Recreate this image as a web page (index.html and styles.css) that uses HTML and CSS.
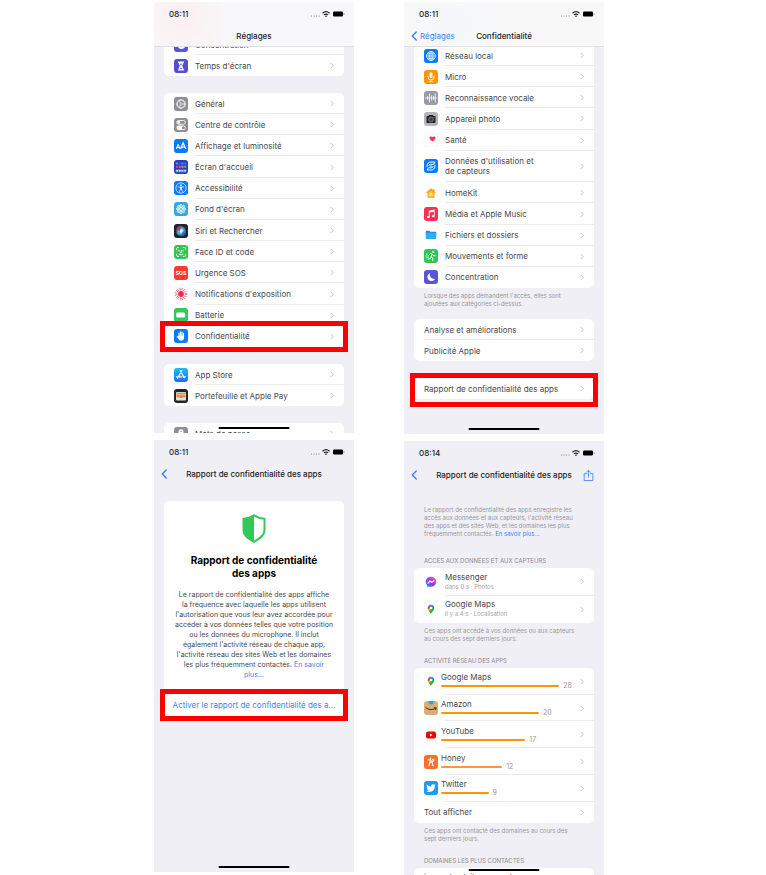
FILE: index.html
```
<!DOCTYPE html>
<html lang="fr">
<head>
<meta charset="utf-8">
<title>Rapport de confidentialité des apps</title>
<link rel="stylesheet" href="styles.css">
</head>
<body>
<svg class="defs" aria-hidden="true">
  <symbol id="chev" viewBox="0 0 8 14"><path d="M1.5 2 6.500 7l-5 5" fill="none" stroke="#b4b4b8" stroke-width="1.600"/></symbol>
  <symbol id="back" viewBox="0 0 12 20"><path d="M10.500 2 2.500 10l8 8" fill="none" stroke="#2f7cf6" stroke-width="2.600" stroke-linecap="round" stroke-linejoin="round"/></symbol>
  <symbol id="status" viewBox="0 0 36 10">
    <g fill="#777"><circle cx="2.500" cy="7" r=".6"/><circle cx="5" cy="7" r=".6"/><circle cx="7.500" cy="7" r=".6"/><circle cx="10" cy="7" r=".6"/></g>
    <g fill="none" stroke="#222" stroke-width="1.200"><path d="M13.500 4.200q3.500-3 7 0"/><path d="M14.900 5.900q2.100-1.700 4.200 0"/></g>
    <path d="M15.900 7q1.100-.8 2.200 0L17 8.300z" fill="#222"/>
    <rect x="24" y="2.500" width="10" height="5" rx="1.200" fill="#000"/><rect x="34.500" y="4" width="1" height="2" fill="#999"/>
  </symbol>
  <symbol id="pin" viewBox="0 0 28 28">
    <rect x=".5" y=".5" width="27" height="27" rx="6" fill="#fff" stroke="#ececf0"/>
    <path d="M14 24c-.8-3.500-6.500-6.500-6.500-12 0-1.800.7-3.300 1.700-4.500L14 12z" fill="#fbbc04"/>
    <path d="M14 24c.8-3.500 6.500-6.500 6.500-12 0-1.500-.4-2.800-1.100-3.900L10 18.500c1.600 2 3.500 3.500 4 5.500z" fill="#34a853"/>
    <path d="M9.200 7.500A6.500 6.500 0 0 1 14 5.400l-1 4.800-3.500 4.100-1.600-.2A7 7 0 0 1 9.200 7.500z" fill="#ea4335"/>
    <path d="M13 5.500a6.500 6.500 0 0 1 6.500 2.700L14.300 14.500 10 11z" fill="#4285f4"/>
    <circle cx="14" cy="11.800" r="2.500" fill="#fff"/>
  </symbol>
</svg>

<main class="board">
  <div class="column">

    <section class="phone phone-a" aria-label="Réglages">
      <header class="top frosted tint-pink">
        <div class="status"><span>08:11</span><svg class="status-icons"><use href="#status"/></svg></div>
        <div class="nav"><h1>Réglages</h1></div>
      </header>
      <div class="scroll settings">
        <nav class="group">
          <a class="row" href="#"><svg class="icon" viewBox="0 0 28 28"><rect width="28" height="28" rx="6" fill="#5856d6"/><path d="M12 6a8.300 8.300 0 1 0 10.500 11.500A8.800 8.800 0 0 1 12 6z" fill="#fff"/></svg><span>Concentration</span><svg class="chev"><use href="#chev"/></svg></a>
          <a class="row" href="#"><svg class="icon" viewBox="0 0 28 28"><rect width="28" height="28" rx="6" fill="#5550d0"/><path d="M8 5h12v2.500h-1.500c0 3.500-1 5-3 6.500 2 1.500 3 3 3 6.500H20V23H8v-2.500h1.500c0-3.500 1-5 3-6.500-2-1.500-3-3-3-6.500H8z" fill="#fff"/><path d="M11.500 9.500h5L14 13zM11 20q3-4 6 0z" fill="#5550d0"/></svg><span>Temps d'écran</span><svg class="chev"><use href="#chev"/></svg></a>
        </nav>
        <nav class="group twelve">
          <a class="row" href="#"><svg class="icon" viewBox="0 0 28 28"><rect width="28" height="28" rx="6" fill="#8e8e93"/><g fill="none" stroke="#fff"><circle cx="14" cy="14" r="9" stroke-width="2" stroke-dasharray="1.700 1.130"/><circle cx="14" cy="14" r="7.500" stroke-width="1.500"/><circle cx="14" cy="14" r="2.200" stroke-width="1.300"/><path d="M16 14h5.500M13 12l-2.800-4.500M13 16l-2.800 4.500" stroke-width="1.300"/></g></svg><span>Général</span><svg class="chev"><use href="#chev"/></svg></a>
          <a class="row" href="#"><svg class="icon" viewBox="0 0 28 28"><rect width="28" height="28" rx="6" fill="#8e8e93"/><rect x="5.500" y="5" width="17" height="7.500" rx="3.700" fill="none" stroke="#fff" stroke-width="1.700"/><circle cx="9.500" cy="8.700" r="2.800" fill="#fff"/><rect x="4.800" y="15" width="18.400" height="9" rx="4.500" fill="#fff"/><circle cx="18.700" cy="19.500" r="3" fill="#8e8e93"/></svg><span>Centre de contrôle</span><svg class="chev"><use href="#chev"/></svg></a>
          <a class="row" href="#"><svg class="icon" viewBox="0 0 28 28"><rect width="28" height="28" rx="6" fill="#087aff"/><g fill="none" stroke="#fff" stroke-width="2"><path d="M4.500 20 8.300 10.500 12 20M6 16.800h4.600"/><path d="M13 20 18.300 7.500 23.700 20M15 16.300h6.800" stroke-width="2.400"/></g></svg><span>Affichage et luminosité</span><svg class="chev"><use href="#chev"/></svg></a>
          <a class="row" href="#"><svg class="icon" viewBox="0 0 28 28"><rect width="28" height="28" rx="6" fill="#2a3fb8"/><g><rect x="4" y="5" width="4" height="4" fill="#4a90ff"/><rect x="9.500" y="5" width="4" height="4" fill="#3267ee"/><rect x="15" y="5" width="4" height="4" fill="#4a90ff"/><rect x="20.500" y="5" width="4" height="4" fill="#3a6cff"/><rect x="4" y="11.500" width="4" height="4" fill="#f0455a"/><rect x="9.500" y="11.500" width="4" height="4" fill="#e651bb"/><rect x="15" y="11.500" width="4" height="4" fill="#f8914b"/><rect x="20.500" y="11.500" width="4" height="4" fill="#49cc77"/><rect x="3" y="18.500" width="22" height="6" rx="2" fill="#5e7fd8"/><path d="M4.500 20h3.500v3H4.500zM10 20h3.500v3H10zM15 20h3.500v3H15zM20.500 20H24v3h-3.500z" fill="#bfe1ff"/></g></svg><span>Écran d'accueil</span><svg class="chev"><use href="#chev"/></svg></a>
          <a class="row" href="#"><svg class="icon" viewBox="0 0 28 28"><rect width="28" height="28" rx="6" fill="#087aff"/><circle cx="14" cy="14" r="10.300" fill="none" stroke="#fff" stroke-width="1.500"/><circle cx="14" cy="8.300" r="1.700" fill="#fff"/><path d="M8.500 11.700 14 12.500l5.500-.8M14 12.500v3.500M13 12.500v3.500L11 21M15 12.500v3.500L17 21" fill="none" stroke="#fff" stroke-width="1.600" stroke-linecap="round" stroke-linejoin="round"/></svg><span>Accessibilité</span><svg class="chev"><use href="#chev"/></svg></a>
          <a class="row" href="#"><svg class="icon" viewBox="0 0 28 28"><rect width="28" height="28" rx="6" fill="#35a9dc"/><g fill="#8fd2ef" stroke="#fff" stroke-width="1.200"><ellipse cx="14" cy="8.500" rx="2.600" ry="4"/><ellipse cx="14" cy="19.500" rx="2.600" ry="4"/><ellipse cx="8.500" cy="14" rx="4" ry="2.600"/><ellipse cx="19.500" cy="14" rx="4" ry="2.600"/><g transform="rotate(45 14 14)"><ellipse cx="14" cy="8.500" rx="2.600" ry="4"/><ellipse cx="14" cy="19.500" rx="2.600" ry="4"/><ellipse cx="8.500" cy="14" rx="4" ry="2.600"/><ellipse cx="19.500" cy="14" rx="4" ry="2.600"/></g><circle cx="14" cy="14" r="2.500" fill="#35a9dc"/></g></svg><span>Fond d'écran</span><svg class="chev"><use href="#chev"/></svg></a>
          <a class="row" href="#"><svg class="icon" viewBox="0 0 28 28"><defs><radialGradient id="siri"><stop offset="0" stop-color="#fff"/><stop offset=".35" stop-color="#7fd8e8"/><stop offset=".75" stop-color="#2b7a9c"/><stop offset="1" stop-color="#24243a"/></radialGradient></defs><rect width="28" height="28" rx="6" fill="#22202f"/><circle cx="14" cy="14" r="11" fill="url(#siri)"/><path d="M4 10a11 11 0 0 1 11-7c-2 5-3 7-1 11C10 14 7 13 4 10z" fill="#b3315f" opacity=".85"/><path d="M15 15c4-1 7-1 9.500 1A11 11 0 0 1 14 25c2-4 3-6 1-10z" fill="#3558d8" opacity=".7"/><path d="M5 18c4-4 7-4 9-4-1 4-2 6-5 9a9 9 0 0 1-4-5z" fill="#2ec2a7" opacity=".6"/><circle cx="14.500" cy="14" r="3" fill="#fff" opacity=".8"/></svg><span>Siri et Rechercher</span><svg class="chev"><use href="#chev"/></svg></a>
          <a class="row" href="#"><svg class="icon" viewBox="0 0 28 28"><rect width="28" height="28" rx="6" fill="#30c555"/><g fill="none" stroke="#fff" stroke-width="1.700" stroke-linecap="round"><path d="M5 9.500V7.500Q5 5 7.500 5h2M18.500 5h2Q23 5 23 7.500v2M23 18.500v2q0 2.500-2.500 2.500h-2M9.500 23h-2Q5 23 5 20.500v-2M10 10.500v2M18 10.500v2M14.500 10.500v5h-1.500M10 18.500q4 3 8 0"/></g></svg><span>Face ID et code</span><svg class="chev"><use href="#chev"/></svg></a>
          <a class="row" href="#"><span class="icon sos">SOS</span><span>Urgence SOS</span><svg class="chev"><use href="#chev"/></svg></a>
          <a class="row" href="#"><svg class="icon" viewBox="0 0 28 28"><rect x=".5" y=".5" width="27" height="27" rx="6" fill="#fff" stroke="#f1f1f4"/><circle cx="14" cy="14" r="5.800" fill="#f5284d"/><circle cx="14" cy="14" r="8.500" fill="none" stroke="#f5284d" stroke-width="1.900" stroke-dasharray="2 1.337"/><circle cx="14" cy="14" r="11.300" fill="none" stroke="#f5284d" stroke-width="1.900" stroke-dasharray="1.900 2.537"/></svg><span>Notifications d'exposition</span><svg class="chev"><use href="#chev"/></svg></a>
          <a class="row" href="#"><svg class="icon" viewBox="0 0 28 28"><rect width="28" height="28" rx="6" fill="#34c759"/><rect x="4.500" y="9" width="17.500" height="10" rx="2.500" fill="#fff"/><path d="M23.200 12q2 2 0 4z" fill="#fff"/></svg><span>Batterie</span><svg class="chev"><use href="#chev"/></svg></a>
          <a class="row marked" href="#"><svg class="icon" viewBox="0 0 28 28"><rect width="28" height="28" rx="6" fill="#087aff"/><g fill="none" stroke="#fff" stroke-width="2.300" stroke-linecap="round"><path d="M10 15V8M13 13V5.500M16 13V6M19 15V8.500"/></g><path d="M8.800 13h11.400v4c0 4-2 6.500-5.700 6.500-3 0-4.500-1.500-5.700-3.800L5.600 15.500c-.6-1.400.9-2.200 1.900-1.200l1.300 1.600z" fill="#fff"/></svg><span>Confidentialité</span><svg class="chev"><use href="#chev"/></svg></a>
        </nav>
        <nav class="group">
          <a class="row" href="#"><svg class="icon" viewBox="0 0 28 28"><defs><linearGradient id="store" x2="0" y2="1"><stop stop-color="#18bffb"/><stop offset="1" stop-color="#1d6ff2"/></linearGradient></defs><rect width="28" height="28" rx="6" fill="url(#store)"/><g fill="none" stroke="#fff" stroke-width="2.500" stroke-linecap="round"><path d="M15.500 5.500 9 17M12.500 5.500l7.800 14M5 17.500h10.500M19 17.500h4M7.600 20l-.6 1"/></g></svg><span>App Store</span><svg class="chev"><use href="#chev"/></svg></a>
          <a class="row" href="#"><svg class="icon" viewBox="0 0 28 28"><rect width="28" height="28" rx="6" fill="#252525"/><rect x="4" y="6" width="20" height="17" rx="2" fill="#e2e0d7"/><path d="M5 7.500h18V11H5z" fill="#6caed6"/><path d="M5 10h18v3H5z" fill="#f4bd45"/><path d="M5 12.500h18V15H5z" fill="#6ac077"/><path d="M5 14.500h18v2h-6l-3 2-3-2H5z" fill="#ed6a5b"/></svg><span>Portefeuille et Apple Pay</span><svg class="chev"><use href="#chev"/></svg></a>
        </nav>
        <nav class="group">
          <a class="row" href="#"><svg class="icon" viewBox="0 0 28 28"><rect width="28" height="28" rx="6" fill="#8e8e93"/><circle cx="14" cy="9.500" r="5" fill="#fff"/><circle cx="14" cy="8.500" r="1.500" fill="#8e8e93"/><path d="M12.300 13h3.400v9L14 24l-1.700-2z" fill="#fff"/></svg><span>Mots de passe</span><svg class="chev"><use href="#chev"/></svg></a>
        </nav>
      </div>
      <div class="home"></div>
    </section>

    <section class="phone phone-c" aria-label="Activer le rapport">
      <header class="top">
        <div class="status"><span>08:11</span><svg class="status-icons"><use href="#status"/></svg></div>
        <div class="nav"><a class="back" href="#" aria-label="Retour"><svg><use href="#back"/></svg></a><h1>Rapport de confidentialité des apps</h1></div>
      </header>
      <div class="scroll intro">
        <div class="card">
          <svg class="shield" viewBox="0 0 48 58"><path d="M24 2.500C18 6.500 11 9 3 9.500v23C3 43 12 49 24 55.500 36 49 45 43 45 32.500v-23C37 9 30 6.500 24 2.500z" fill="#fff" stroke="#34c759" stroke-width="4" stroke-linejoin="round"/><path d="M24 2.500C18 6.500 11 9 3 9.500v23C3 43 12 49 24 55.500z" fill="#34c759"/></svg>
          <h2>Rapport de confidentialité<br>des apps</h2>
          <p>Le rapport de confidentialité des apps affiche<br>la fréquence avec laquelle les apps utilisent<br>l'autorisation que vous leur avez accordée pour<br>accéder à vos données telles que votre position<br>ou les données du microphone. Il inclut<br>également l'activité réseau de chaque app,<br>l'activité réseau des sites Web et les domaines<br>les plus fréquemment contactés. <a href="#">En savoir<br>plus…</a></p>
          <button class="enable marked" type="button">Activer le rapport de confidentialité des a...</button>
        </div>
      </div>
      <div class="home"></div>
    </section>
  </div>

  <div class="column">

    <section class="phone phone-b" aria-label="Confidentialité">
      <header class="top frosted tint-blue">
        <div class="status"><span>08:11</span><svg class="status-icons"><use href="#status"/></svg></div>
        <div class="nav"><a class="back" href="#"><svg><use href="#back"/></svg>Réglages</a><h1>Confidentialité</h1></div>
      </header>
      <div class="scroll privacy">
        <nav class="group eleven">
          <a class="row" href="#"><svg class="icon" viewBox="0 0 28 28"><rect width="28" height="28" rx="6" fill="#087aff"/><g fill="none" stroke="#fff" stroke-width="1.500"><circle cx="14" cy="14" r="9"/><ellipse cx="14" cy="14" rx="4" ry="9"/><path d="M5 14h18M6.500 9.500h15M6.500 18.500h15M14 5v18"/></g></svg><span>Réseau local</span><svg class="chev"><use href="#chev"/></svg></a>
          <a class="row" href="#"><svg class="icon" viewBox="0 0 28 28"><rect width="28" height="28" rx="6" fill="#ff9500"/><rect x="11" y="4.500" width="6" height="12" rx="3" fill="#fff"/><path d="M8 12.500v1.500a6 6 0 0 0 12 0v-1.500M14 20v3M10.500 23.200h7" fill="none" stroke="#fff" stroke-width="1.600" stroke-linecap="round"/></svg><span>Micro</span><svg class="chev"><use href="#chev"/></svg></a>
          <a class="row" href="#"><svg class="icon" viewBox="0 0 28 28"><rect width="28" height="28" rx="6" fill="#9a9ba6"/><path d="M3 14h22M7 11v6M11 6v16M15 9.500v9M19 11v6M22.500 6v16" fill="none" stroke="#fff" stroke-width="1.500" stroke-linecap="round"/></svg><span>Reconnaissance vocale</span><svg class="chev"><use href="#chev"/></svg></a>
          <a class="row" href="#"><svg class="icon" viewBox="0 0 28 28"><rect width="28" height="28" rx="6" fill="#b6b6ba"/><path d="M5 9.500q0-1.500 1.500-1.500H9l1.500-2h7L19 8h2.500Q23 8 23 9.500v11q0 1.500-1.500 1.500h-15Q5 22 5 20.500z" fill="#242426"/><circle cx="14" cy="15" r="4.600" fill="#3c3c3e" stroke="#aaa" stroke-width="1.300"/><circle cx="20" cy="10.500" r=".9" fill="#f7c33c"/></svg><span>Appareil photo</span><svg class="chev"><use href="#chev"/></svg></a>
          <a class="row" href="#"><svg class="icon" viewBox="0 0 28 28"><rect x=".5" y=".5" width="27" height="27" rx="6" fill="#fff" stroke="#ececef"/><path d="M17 17C12 13.800 10.500 11.500 11 9.200c.6-2.700 4.300-3.200 6-.6 1.700-2.600 5.400-2.100 6 .6.500 2.300-1 4.600-6 7.800z" fill="#fb315c"/></svg><span>Santé</span><svg class="chev"><use href="#chev"/></svg></a>
          <a class="row" href="#"><svg class="icon" viewBox="0 0 28 28"><rect width="28" height="28" rx="6" fill="#087aff"/><g fill="none" stroke="#fff" stroke-width="1.900" stroke-linecap="round" stroke-linejoin="round"><path d="M6 15.500C5 9.500 9 6 14 6h8l-3 4.500h-6.500q-2.500 0-2.500 2.300M22 12.500c1 6-3 9.500-8 9.500H6l3-4.500h6.500q2.500 0 2.500-2.300M12.500 14h3"/></g></svg><span>Données d'utilisation et<br>de capteurs</span><svg class="chev"><use href="#chev"/></svg></a>
          <a class="row" href="#"><svg class="icon" viewBox="0 0 28 28"><path d="M14 4.500 4.500 12.500l1 1.500H7v8.500q0 1 1 1h12q1 0 1-1V14h1.500l1-1.500L21 10.300V6h-2.500v2.200z" fill="#ffa11e"/><path d="m14 10-5 4.300v6.700h10v-6.700z" fill="#ffcf4b"/><path d="m14 14-2.500 2v3h5v-3z" fill="#fff0a8"/></svg><span>HomeKit</span><svg class="chev"><use href="#chev"/></svg></a>
          <a class="row" href="#"><svg class="icon" viewBox="0 0 28 28"><rect width="28" height="28" rx="6" fill="#fa3152"/><path d="M10.500 20V8.200L20.500 6v12" fill="none" stroke="#fff" stroke-width="1.700"/><path d="m10.500 8 10-2.300v3.500l-10 2.300z" fill="#fff"/><ellipse cx="8.700" cy="20.300" rx="2.800" ry="2.300" fill="#fff"/><ellipse cx="18.700" cy="18.300" rx="2.800" ry="2.300" fill="#fff"/></svg><span>Média et Apple Music</span><svg class="chev"><use href="#chev"/></svg></a>
          <a class="row" href="#"><svg class="icon" viewBox="0 0 28 28"><path d="M3.500 7q0-1.500 1.500-1.500h6l2 2h10q1.500 0 1.500 1.500v4h-21z" fill="#1895e2"/><path d="M3.500 10h21v10.500q0 1.500-1.500 1.500H5q-1.500 0-1.500-1.500z" fill="#2baef6"/></svg><span>Fichiers et dossiers</span><svg class="chev"><use href="#chev"/></svg></a>
          <a class="row" href="#"><svg class="icon" viewBox="0 0 28 28"><rect width="28" height="28" rx="6" fill="#30c555"/><circle cx="18.500" cy="6" r="2.200" fill="#fff"/><g fill="none" stroke="#fff" stroke-width="2" stroke-linecap="round" stroke-linejoin="round"><path d="m10 12 2.500-3 4 1-2.500 6 4 2.500-1 4.500M14 16l-2 3.500-4 1M17 11l2 2.500h3.500"/><path d="M4.500 10H7M3.500 14H9M4.500 17.500H9" stroke-width="1.300"/></g></svg><span>Mouvements et forme</span><svg class="chev"><use href="#chev"/></svg></a>
          <a class="row" href="#"><svg class="icon" viewBox="0 0 28 28"><rect width="28" height="28" rx="6" fill="#5856d6"/><path d="M12 6a8.300 8.300 0 1 0 10.500 11.500A8.800 8.800 0 0 1 12 6z" fill="#fff"/></svg><span>Concentration</span><svg class="chev"><use href="#chev"/></svg></a>
        </nav>
        <p class="note">Lorsque des apps demandent l'accès, elles sont<br>ajoutées aux catégories ci-dessus.</p>
        <nav class="group plain">
          <a class="row" href="#"><span>Analyse et améliorations</span><svg class="chev"><use href="#chev"/></svg></a>
          <a class="row" href="#"><span>Publicité Apple</span><svg class="chev"><use href="#chev"/></svg></a>
        </nav>
        <nav class="group plain">
          <a class="row marked low" href="#"><span>Rapport de confidentialité des apps</span><svg class="chev"><use href="#chev"/></svg></a>
        </nav>
      </div>
      <div class="home"></div>
    </section>

    <section class="phone phone-d" aria-label="Rapport de confidentialité des apps">
      <header class="top">
        <div class="status"><span>08:14</span><svg class="status-icons"><use href="#status"/></svg></div>
        <div class="nav"><a class="back" href="#" aria-label="Retour"><svg><use href="#back"/></svg></a><h1>Rapport de confidentialité des apps</h1><button class="share" type="button" aria-label="Partager"><svg viewBox="0 0 24 26"><path d="M8 9H2.500v15h19V9H16M12 16.500V2M7.500 6 12 1.500 16.500 6" fill="none" stroke="#3b83f7" stroke-width="1.800" stroke-linecap="round" stroke-linejoin="round"/></svg></button></div>
      </header>
      <div class="scroll report">
        <p class="note lead">Le rapport de confidentialité des apps enregistre les<br>accès aux données et aux capteurs, l'activité réseau<br>des apps et des sites Web, et les domaines les plus<br>fréquemment contactés. <a href="#">En savoir plus…</a></p>
        <h2 class="label">ACCÈS AUX DONNÉES ET AUX CAPTEURS</h2>
        <nav class="group access">
          <a class="row" href="#"><svg class="icon" viewBox="0 0 28 28"><defs><linearGradient id="msg" x1="0" y1="1" x2="1" y2="0"><stop stop-color="#1684ff"/><stop offset=".5" stop-color="#9a36fb"/><stop offset="1" stop-color="#ff6b71"/></linearGradient></defs><path d="M14 3.500c-6 0-10.500 4.300-10.500 10 0 3 1.200 5.500 3.200 7.300V24.500l3.600-1.600c1.100.4 2.400.6 3.700.6 6 0 10.500-4.300 10.500-10S20 3.500 14 3.500z" fill="url(#msg)"/><path d="m8 16.200 4-4.200 3.400 2.600 4.600-3" fill="none" stroke="#fff" stroke-width="2.400" stroke-linejoin="round" stroke-linecap="round"/></svg><span>Messenger<small>dans 0 s · Photos</small></span><svg class="chev"><use href="#chev"/></svg></a>
          <a class="row" href="#"><svg class="icon"><use href="#pin"/></svg><span>Google Maps<small>il y a 4 s · Localisation</small></span><svg class="chev"><use href="#chev"/></svg></a>
        </nav>
        <p class="note">Ces apps ont accédé à vos données ou aux capteurs<br>au cours des sept derniers jours.</p>
        <h2 class="label">ACTIVITÉ RÉSEAU DES APPS</h2>
        <nav class="group network">
          <a class="row" href="#"><svg class="icon"><use href="#pin"/></svg><span class="usage">Google Maps<span class="meter"><i style="width:87%"></i>28</span></span><svg class="chev"><use href="#chev"/></svg></a>
          <a class="row" href="#"><svg class="icon" viewBox="0 0 28 28"><rect width="28" height="28" rx="6" fill="#d9ad73"/><path d="M9.500 0h9v7l-2.200-1.500L14 7.500l-2.200-2L9.500 7z" fill="#27a5d8"/><path d="M4 14q10 6.500 19.500.5M20.500 13.500l3.800.2-1 3.600" fill="none" stroke="#3b2c20" stroke-width="1.900" stroke-linecap="round"/></svg><span class="usage">Amazon<span class="meter"><i style="width:72%"></i>20</span></span><svg class="chev"><use href="#chev"/></svg></a>
          <a class="row" href="#"><svg class="icon" viewBox="0 0 28 28"><rect x=".5" y=".5" width="27" height="27" rx="6" fill="#fff" stroke="#f1f1f1"/><rect x="4" y="7" width="20" height="14" rx="4" fill="#f00000"/><path d="m12 11 5 3-5 3z" fill="#fff"/></svg><span class="usage">YouTube<span class="meter"><i style="width:62%"></i>17</span></span><svg class="chev"><use href="#chev"/></svg></a>
          <a class="row" href="#"><svg class="icon" viewBox="0 0 28 28"><rect width="28" height="28" rx="6" fill="#fa7028"/><path d="M8 10c3-.5 6-2 5.500-4M13.500 6 10 22M11 17.500c1.500-3.500 6-4.500 6-1.500 0 2-1 5.500 1.500 5.500M14.500 14c4-.5 6.500-3.500 5-5s-3.500.5-4 3" fill="none" stroke="#fff" stroke-width="2.100" stroke-linecap="round"/></svg><span class="usage">Honey<span class="meter"><i class="soft" style="width:45%"></i>12</span></span><svg class="chev"><use href="#chev"/></svg></a>
          <a class="row" href="#"><svg class="icon" viewBox="0 0 28 28"><rect width="28" height="28" rx="6" fill="#1d9bf0"/><path d="M23.500 8.200c-.7.300-1.400.5-2.200.6.800-.5 1.400-1.200 1.700-2.100-.8.400-1.600.8-2.500 1A3.900 3.900 0 0 0 13.900 11.200c-3.200-.2-6.100-1.700-8-4-1.100 1.800-.5 4 1.200 5.200-.6 0-1.200-.2-1.800-.5 0 1.900 1.300 3.500 3.100 3.900-.6.100-1.200.2-1.800.1.500 1.500 1.900 2.600 3.600 2.700A8 8 0 0 1 4.500 20.200a11 11 0 0 0 17-9.800c.8-.6 1.500-1.300 2-2.200z" fill="#fff"/></svg><span class="usage">Twitter<span class="meter"><i style="width:35%"></i>9</span></span><svg class="chev"><use href="#chev"/></svg></a>
          <a class="row" href="#"><span>Tout afficher</span><svg class="chev"><use href="#chev"/></svg></a>
        </nav>
        <p class="note">Ces apps ont contacté des domaines au cours des<br>sept derniers jours.</p>
        <h2 class="label">DOMAINES LES PLUS CONTACTÉS</h2>
        <nav class="group plain domains">
          <a class="row" href="#"><span>inappcheck.itunes.apple.com</span></a>
        </nav>
      </div>
      <div class="home"></div>
    </section>
  </div>
</main>
</body>
</html>
```
FILE: styles.css
```
* { box-sizing: border-box; }

body {
  margin: 0;
  background: #fff;
  color: #48484b;
  font: 8px/10px Inter, "Liberation Sans", sans-serif;
}

a { color: #3b83f7; text-decoration: none; }
h1, h2, p { margin: 0; }
button { border: 0; padding: 0; background: none; font: inherit; }
.defs { position: absolute; width: 0; height: 0; }

/* Board of four screens */
.board {
  display: grid;
  grid-template-columns: repeat(2, minmax(0, 200px));
  justify-content: center;
  gap: 50px;
  padding: 2px 8px 0 0;
}
.column { display: flex; flex-direction: column; gap: 7px; }
.phone {
  position: relative;
  display: flex;
  flex-direction: column;
  overflow: hidden;
  background: #f0eff5;
}
.phone-a { aspect-ratio: 200 / 431; }
.phone-b, .phone-c { aspect-ratio: 200 / 432; }
.phone-d { aspect-ratio: 200 / 434; }

.home {
  position: absolute;
  bottom: 4px;
  left: 50%;
  width: 71px;
  height: 2px;
  border-radius: 1px;
  background: #000;
  transform: translateX(-50%);
}

/* Status and navigation bars */
.top {
  flex: none;
  border-bottom: 1px solid transparent;
  z-index: 1;
}
.frosted { border-color: #e0e0e3; }
.tint-pink { background: radial-gradient(circle at 14% 30%, #fceff0, #f8f7f9 26%); }
.tint-blue { background: radial-gradient(circle at 24% 55%, #f4f8fb, #f8f8f9 30%); }
.status {
  display: flex;
  justify-content: space-between;
  align-items: center;
  height: 24px;
  padding: 0 9px 0 15px;
  color: #222;
  font-weight: 500;
}
.status-icons { width: 36px; height: 10px; }
.nav {
  display: grid;
  grid-template-columns: 1fr auto 1fr;
  align-items: center;
  height: 20px;
  padding: 0 7px;
}
.nav h1 {
  grid-column: 2;
  color: #1c1c1e;
  font-size: 8px;
  font-weight: 500;
}
.back { display: flex; align-items: center; gap: 3px; grid-row: 1; }
.back svg { width: 6px; height: 10px; }
.share { justify-self: end; width: 14px; height: 14px; }
.share svg { display: block; width: 11px; height: 13px; }

/* Scrolling area and grouped rows */
.scroll { flex: 1; min-height: 0; padding: 0 10px; overflow: hidden; }
.group {
  display: grid;
  grid-auto-rows: minmax(21px, auto);
  border-radius: 5px;
  background: #fff;
}
.row {
  position: relative;
  display: flex;
  align-items: center;
  gap: 7px;
  padding: 0 10px;
  color: inherit;
}
.row > span:not(.icon) { flex: 1; white-space: nowrap; }
.row:not(:last-child)::before {
  content: "";
  position: absolute;
  right: 0;
  bottom: 0;
  left: 31px;
  height: 1px;
  background: #ebebee;
}
.plain .row::before { left: 10px; }
.icon { flex: none; width: 14px; height: 14px; }
.chev { flex: none; width: 4px; height: 7px; }
.sos {
  border-radius: 3px;
  background: #ff3b30;
  color: #fff;
  font: 700 5px/14px Inter, "Liberation Sans", sans-serif;
  text-align: center;
}
.note {
  padding: 4px 10px 0;
  color: #98989d;
  font-size: 6px;
  line-height: 8px;
  white-space: nowrap;
}

/* Red frame around the item to press */
.marked { position: relative; }
.marked::after {
  content: "";
  position: absolute;
  inset: -5px -4px;
  border: 5px solid #f00;
  z-index: 2;
}
.marked.low::after { bottom: -8px; }

/* Réglages */
.settings > .group { margin-bottom: 17px; }
.settings > .group:first-child { margin-top: -13px; }
.twelve { grid-auto-rows: 1fr; min-height: 254px; }

/* Confidentialité */
.eleven {
  grid-template-rows: repeat(5, 2fr) 3fr repeat(5, 2fr);
  min-height: 243px;
  margin-top: -2px;
}
.privacy .note { margin-bottom: 11px; }
.privacy .plain { margin-bottom: 17px; }

/* Activation card */
.intro { padding-top: 16px; }
.card {
  display: flex;
  flex-direction: column;
  align-items: center;
  padding-top: 13px;
  border-radius: 5px;
  background: #fff;
  text-align: center;
  white-space: nowrap;
}
.shield { width: 24px; height: 29px; }
.card h2 {
  margin: 11px 0 10px;
  color: #000;
  font-size: 10px;
  font-weight: 700;
  line-height: 13px;
}
.card p { font-size: 7px; line-height: 10px; }
.enable {
  align-self: stretch;
  height: 22px;
  margin-top: 14px;
  color: #3b83f7;
}

/* Report */
.report .lead { padding-top: 20px; margin-bottom: 5px; }
.label {
  margin: 14px 0 3px;
  padding: 0 10px;
  color: #8a8a8f;
  font-size: 6px;
  font-weight: 400;
  line-height: 8px;
  white-space: nowrap;
}
.lead + .label { margin-top: 19px; }
.access { grid-auto-rows: 1fr; min-height: 55px; }
.access small { display: block; color: #a4a4a8; font-size: 6px; }
.network { grid-template-rows: repeat(5, 5fr) 4fr; min-height: 155px; }
.network .row { gap: 3px; }
.usage { display: flex; flex-direction: column; }
.meter {
  display: flex;
  align-items: center;
  gap: 4px;
  height: 8px;
  color: #98989d;
  font-size: 7px;
}
.meter i { flex: none; height: 2px; border-radius: 1px; background: #ff9500; }
.meter .soft { background: #ff9447; }
.domains { grid-auto-rows: 17px; }
```
